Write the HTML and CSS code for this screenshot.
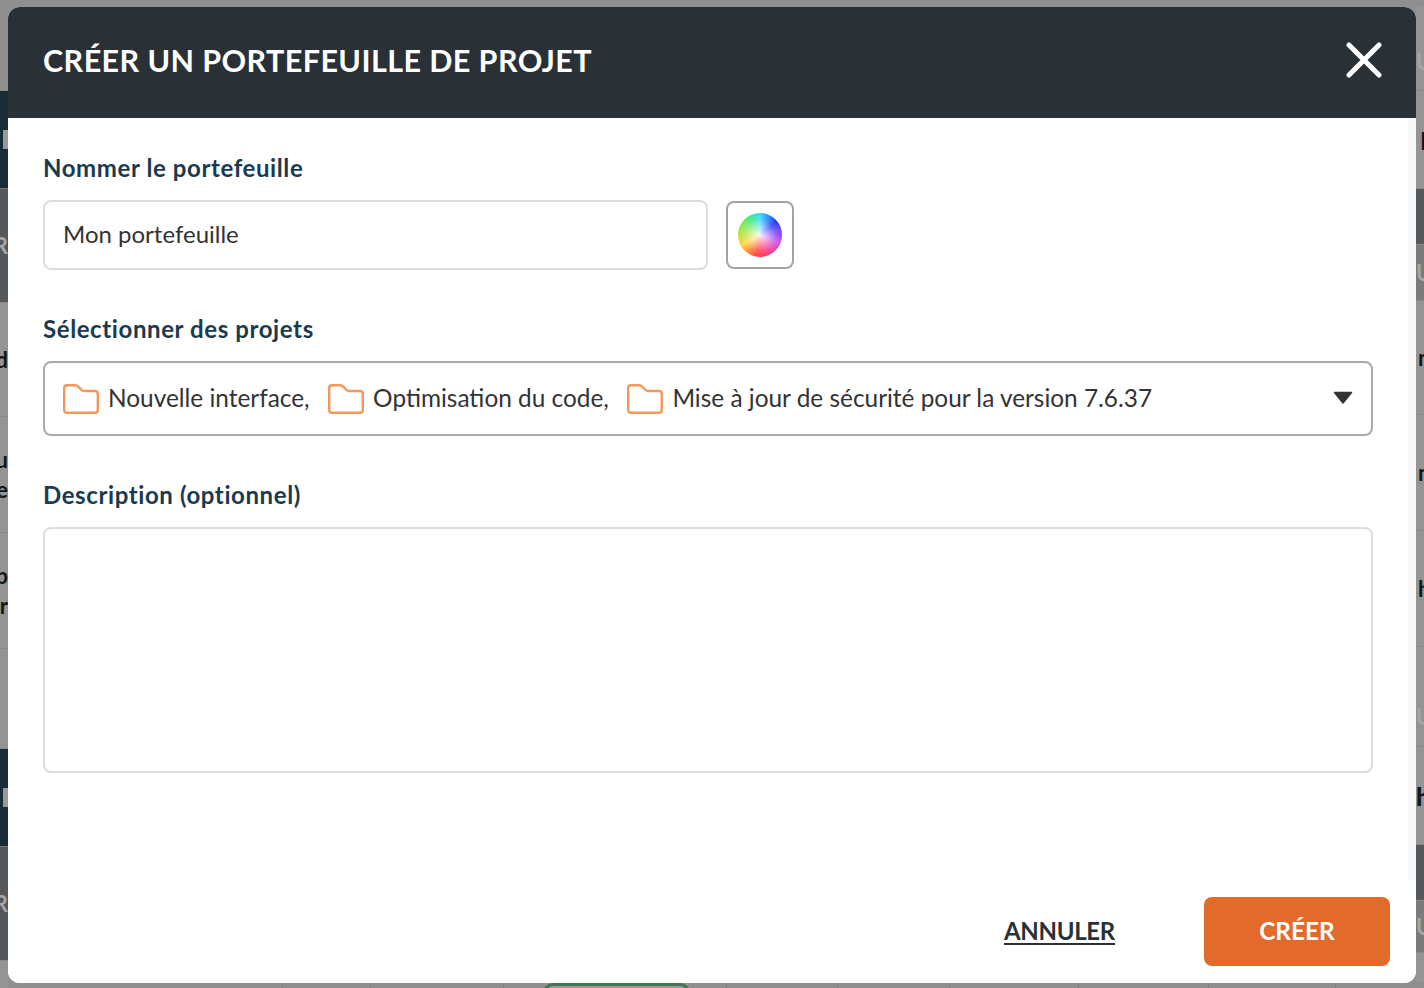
FILE: index.html
```html
<!DOCTYPE html>
<html lang="fr">
<head>
<meta charset="utf-8">
<title>Créer un portefeuille de projet</title>
<link rel="stylesheet" href="styles.css">
</head>
<body>
<div class="backdrop">
  <div class="strip strip-left">
    <div class="seg h84"></div>
    <div class="seg h97 navy"><span class="chip"></span></div>
    <div class="seg h114 slate"><span class="frag faint">R</span></div>
    <div class="seg h114 soft"><span class="frag ink">d</span></div>
    <div class="seg h116 soft"><span class="frag ink">u</span><span class="frag ink">e</span></div>
    <div class="seg h116 soft"><span class="frag ink">p</span><span class="frag ink">r</span></div>
    <div class="seg h100 soft"></div>
    <div class="seg h97 navy"><span class="chip"></span></div>
    <div class="seg h114 slate"><span class="frag faint">R</span></div>
    <div class="seg h30 soft"></div>
  </div>
  <div class="strip strip-right">
    <div class="seg h84 soft low-a"><span class="frag faint">U</span></div>
    <div class="seg h97 soft"><span class="frag ink inset-wide big">I</span></div>
    <div class="seg h56 slate"></div>
    <div class="seg h56 mid"><span class="frag faint">U</span></div>
    <div class="seg h114 soft"><span class="frag ink inset">n</span></div>
    <div class="seg h116 soft"><span class="frag ink inset">n</span></div>
    <div class="seg h116 soft"><span class="frag ink inset">h</span></div>
    <div class="seg h100 soft low-b"><span class="frag faint">U</span></div>
    <div class="seg h97 soft"><span class="frag ink big">h</span></div>
    <div class="seg h56 slate"></div>
    <div class="seg h52 mid"><span class="frag faint">U</span></div>
    <div class="seg h30 soft"></div>
  </div>
  <div class="floor">
    <span class="cell c283"></span><span class="cell c88"></span><span class="cell c133"></span>
    <span class="cell c223"></span><span class="cell c111"></span><span class="cell c112"></span>
    <span class="cell c129"></span><span class="cell c130"></span><span class="cell c127"></span>
  </div>
  <div class="pill"></div>
</div>

<main class="modal">
  <header class="modal-head">
    <h1 class="modal-title">CRÉER UN PORTEFEUILLE DE PROJET</h1>
    <svg class="close" viewBox="0 0 36 36" width="36" height="36" aria-hidden="true"><path d="M3 3 L33 33 M33 3 L3 33" fill="none" stroke="#fff" stroke-width="5" stroke-linecap="round"/></svg>
  </header>

  <div class="modal-body">
    <div class="field-label first">Nommer le portefeuille</div>
    <div class="name-row">
      <div class="input name-input">Mon portefeuille</div>
      <div class="color-btn"><span class="wheel"></span></div>
    </div>

    <div class="field-label second">Sélectionner des projets</div>
    <div class="select">
      <span class="proj">
        <svg class="folder" viewBox="0 0 36 30" width="36" height="30" aria-hidden="true"><path d="M1.2 4 Q1.2 1.2 4 1.2 H12 Q14 1.2 15 2.4 L18.5 6 Q19.5 7 21 7 H32 Q34.8 7 34.8 10 V26 Q34.8 28.8 32 28.8 H4 Q1.2 28.8 1.2 26 Z" fill="none" stroke="#f3985a" stroke-width="2.4"/></svg>
        <span class="proj-text">Nouvelle interface,</span>
      </span>
      <span class="proj">
        <svg class="folder" viewBox="0 0 36 30" width="36" height="30" aria-hidden="true"><path d="M1.2 4 Q1.2 1.2 4 1.2 H12 Q14 1.2 15 2.4 L18.5 6 Q19.5 7 21 7 H32 Q34.8 7 34.8 10 V26 Q34.8 28.8 32 28.8 H4 Q1.2 28.8 1.2 26 Z" fill="none" stroke="#f3985a" stroke-width="2.4"/></svg>
        <span class="proj-text">Optimisation du code,</span>
      </span>
      <span class="proj">
        <svg class="folder" viewBox="0 0 36 30" width="36" height="30" aria-hidden="true"><path d="M1.2 4 Q1.2 1.2 4 1.2 H12 Q14 1.2 15 2.4 L18.5 6 Q19.5 7 21 7 H32 Q34.8 7 34.8 10 V26 Q34.8 28.8 32 28.8 H4 Q1.2 28.8 1.2 26 Z" fill="none" stroke="#f3985a" stroke-width="2.4"/></svg>
        <span class="proj-text">Mise à jour de sécurité pour la version 7.6.37</span>
      </span>
      <svg class="caret" viewBox="0 0 20 14" width="20" height="14" aria-hidden="true"><path d="M1.5 1.5 H18.5 L10 12 Z" fill="#333" stroke="#333" stroke-width="1.5" stroke-linejoin="round"/></svg>
    </div>

    <div class="field-label third">Description (optionnel)</div>
    <div class="input textarea"></div>
  </div>

  <footer class="modal-foot">
    <span class="cancel">ANNULER</span>
    <span class="create">CRÉER</span>
  </footer>
</main>
</body>
</html>
```

FILE: styles.css
```css
* { box-sizing: border-box; }
html, body { margin: 0; height: 100%; }
body {
  width: 1424px;
  height: 988px;
  overflow: hidden;
  position: relative;
  background: #969696;
  font-family: "Lato", "Liberation Sans", sans-serif;
  color: #333;
}

/* dimmed page behind the modal */
.backdrop { position: absolute; inset: 0; overflow: hidden; background: #8f8f8f; }
.strip { position: absolute; top: 7px; width: 8px; overflow: hidden; display: flex; flex-direction: column; }
.strip-left { left: 0; }
.strip-right { right: 0; }
.seg { flex: none; overflow: hidden; border-bottom: 1px solid #8a8a8a; display: flex; flex-direction: column; justify-content: center; gap: 8px; }
.strip-left .seg { align-items: flex-end; }
.strip-right .seg { align-items: flex-start; }
.h30 { height: 30px; } .h52 { height: 52px; } .h56 { height: 56px; } .h84 { height: 84px; }
.h97 { height: 98px; } .h100 { height: 100px; } .h114 { height: 114px; } .h116 { height: 116px; }
.navy { background: #1a2b38; border-bottom-color: #777; }
.slate { background: #54585b; }
.mid { background: #7b7b7b; }
.soft { background: #949494; }
.low-a { padding-top: 26px; }
.low-b { padding-top: 40px; }
.chip { width: 5px; height: 19px; background: #999; align-self: flex-end; }
.frag { font-weight: 700; font-size: 22px; line-height: 22px; }
.ink { color: #151515; }
.faint { color: #a6a6a6; }
.inset { margin-left: 2px; }
.inset-wide { margin-left: 4px; }
.big { font-size: 25px; font-weight: 900; }
.floor { position: absolute; left: 0; right: 0; top: 983px; height: 5px; display: flex; }
.cell { flex: none; height: 5px; border-right: 1px solid #7f7f7f; }
.c283 { width: 283px; } .c88 { width: 88px; } .c133 { width: 133px; } .c223 { width: 223px; }
.c111 { width: 111px; } .c112 { width: 112px; } .c129 { width: 129px; } .c130 { width: 130px; } .c127 { width: 127px; }
.pill { position: absolute; left: 543px; top: 983px; width: 147px; height: 20px; border: 3px solid #3c7a4d; border-radius: 10px; background: #9b9b9b; }

/* modal */
.modal {
  position: absolute;
  left: 8px;
  top: 7px;
  width: 1408px;
  height: 976px;
  background: #fff;
  border-radius: 12px;
  overflow: hidden;
  display: flex;
  flex-direction: column;
}
.modal-head {
  height: 111px;
  flex: none;
  background: #293136;
  display: flex;
  align-items: center;
  justify-content: space-between;
  padding: 0 34px 6px 35px;
}
.modal-title { margin: 0; color: #fff; font-size: 30.5px; font-weight: 700; line-height: 36px; letter-spacing: 0.42px; }
.close { display: block; }

.modal-body {
  height: 762px;
  flex: none;
  padding: 0 35px;
  background: #fff;
  border-right: 8px solid #f8f8f8;
  display: flex;
  flex-direction: column;
}
.field-label { color: #1b3a4f; font-size: 24px; font-weight: 700; line-height: 30px; letter-spacing: 0.6px; }
.first { margin-top: 35px; }
.second { margin-top: 44px; }
.third { margin-top: 44px; }

.name-row { display: flex; gap: 18px; margin-top: 17px; align-items: stretch; }
.input { border: 2px solid #dcdcdc; border-radius: 8px; background: #fff; }
.name-input { width: 665px; height: 70px; padding: 0 18px 4px; display: flex; align-items: center; font-size: 24px; color: #333; }
.color-btn { width: 68px; height: 68px; margin-top: 1px; border: 2px solid #a3a3a3; border-radius: 8px; display: flex; align-items: center; justify-content: center; }
.wheel {
  width: 44px; height: 44px; border-radius: 50%;
  background:
    radial-gradient(circle, rgba(255,255,255,.9) 0, rgba(255,255,255,.2) 50%, rgba(255,255,255,0) 75%),
    conic-gradient(from 0deg, #29d8ff 0deg, #1a2cff 50deg, #c54cf0 110deg, #ff2b6a 165deg, #ff3b30 190deg, #ffd23a 240deg, #8eea3c 290deg, #3be87a 330deg, #29d8ff 360deg);
}

.select {
  height: 75px;
  margin-top: 17px;
  border: 2px solid #a9a9a9;
  border-radius: 8px;
  padding: 0 18px;
  display: flex;
  align-items: center;
  gap: 18.5px;
  font-size: 24.4px;
}
.proj { display: flex; align-items: center; gap: 9px; white-space: nowrap; }
.proj-text { padding-bottom: 2px; }
.folder { display: block; flex: none; }
.caret { margin-left: auto; flex: none; margin-bottom: 2px; }
.textarea { height: 246px; margin-top: 17px; }

.modal-foot {
  flex: 1;
  display: flex;
  align-items: flex-start;
  justify-content: flex-end;
  padding: 17px 26px 0 0;
  background: #fff;
}
.cancel { margin-top: 17px; margin-right: 89px; font-size: 24px; line-height: 33px; font-weight: 700; letter-spacing: -0.3px; color: #293136; text-decoration: underline; text-underline-offset: 3px; }
.create { width: 186px; height: 69px; padding-bottom: 3px; border-radius: 8px; background: #e26b2b; color: #fff; font-size: 24.4px; font-weight: 700; display: flex; align-items: center; justify-content: center; }
```
